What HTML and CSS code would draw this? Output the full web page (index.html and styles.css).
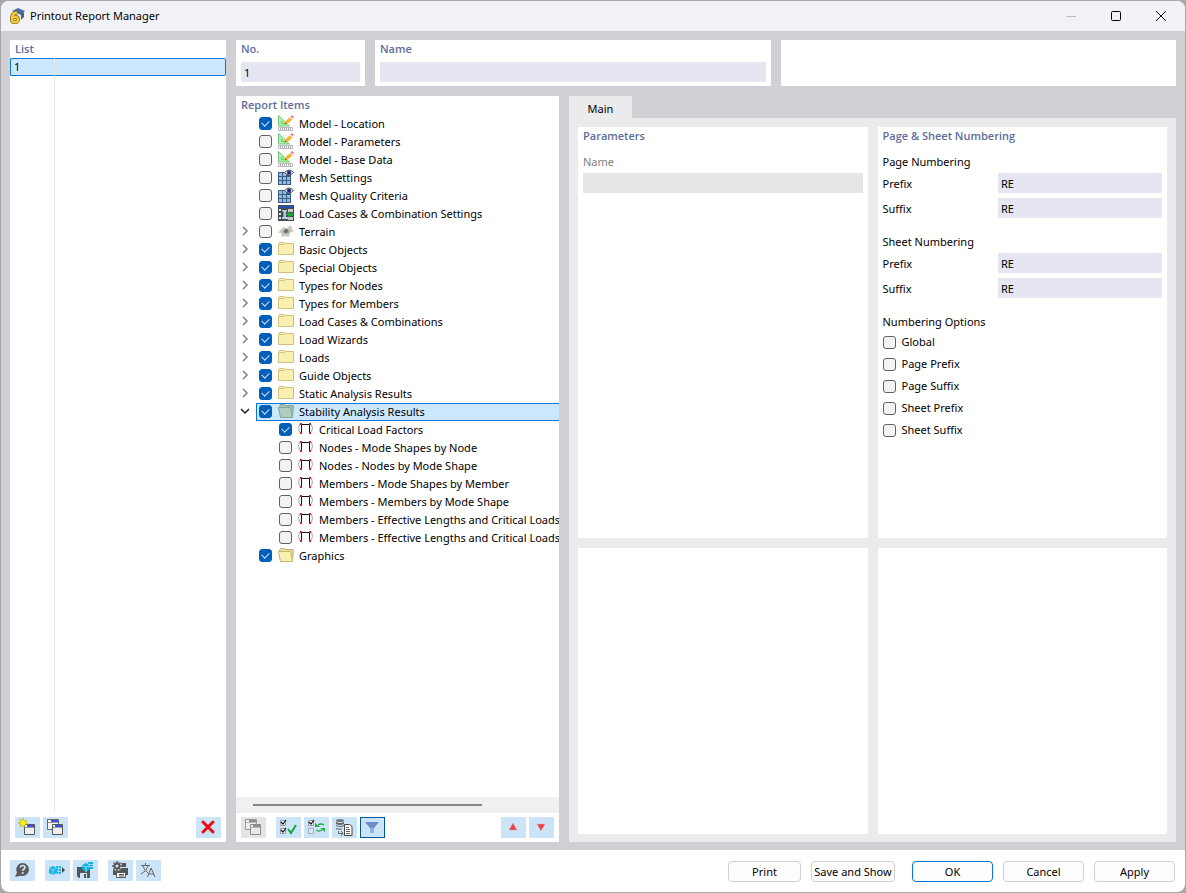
FILE: index.html
```html
<!DOCTYPE html>
<html lang="en">
<head>
  <meta charset="UTF-8" />
  <title>Printout Report Manager</title>
  <meta name="viewport" content="width=device-width, initial-scale=1.0" />
  <link rel="stylesheet" href="styles.css">
</head>
<body>
  <!-- shared icons -->
  <svg class="sprite" aria-hidden="true">
    <symbol id="i-model" viewBox="0 0 16 16">
      <path d="M.5.5v10.500h11z" fill="#a4f5a4" stroke="#7cc47c"/><path d="M3.500 6v2.500H6z" fill="#fff" stroke="#7cc47c"/>
      <path d="M6.500 9.500l1-3.500 4.500-4 2.500 2.500-4.500 4z" fill="#fbb52c"/><path d="M12.500 1.500L14 0l2 2-1.500 1.500z" fill="#f07f72"/><path d="M11.500 2.500l1-1 2 2-1 1z" fill="#ddd"/><path d="M6.500 9.500l.700-2 1.500 1.300z" fill="#664a30"/>
      <path d="M.5 12.500h14v3H.5z" fill="#fff" stroke="#bbb"/><path d="M2.500 13v2M4.500 13v2M6.500 13v2M8.500 13v2M10.500 13v2M12.500 13v2" stroke="#aaa"/>
    </symbol>
    <symbol id="i-mesh" viewBox="0 0 16 16">
      <path d="M0 3h13v13H0z" fill="#3b5a84"/>
      <path d="M1 4h3v3H1zM5 4h3v3H5zM1 8h3v3H1zM5 8h3v3H5zM9 8h3v3H9zM1 12h3v3H1zM5 12h3v3H5zM9 12h3v3H9z" fill="#93bbdf"/>
      <path d="M6.500 3.500q4.500-5 9 0-4.500 5-9 0z" fill="#dde" stroke="#556"/><circle cx="11" cy="3.500" r="2" fill="#22277a"/>
    </symbol>
    <symbol id="i-loads" viewBox="0 0 16 16">
      <path d="M0 0h16v16H0z" fill="#444b55"/><path d="M1 1h14v2H1z" fill="#2450b8"/><path d="M1 4h2v2H1zM1 8h2v2H1zM1 12h2v2H1z" fill="#ddd"/>
      <path d="M4 5h5v1.500H8V12h2v2H4v-2h1.500V6.500H4z" fill="#b6cbe0"/><path d="M10 4h5v3h-5zM10 12h5v3h-5z" fill="#ccc"/><path d="M8 9l4-3v2h3v3h-3v2z" fill="#17a737"/>
    </symbol>
    <symbol id="i-terrain" viewBox="0 0 16 16">
      <path d="M0 10l5-6 4 1 4-3 1 4 2 2-4 2-1 4-4-1-3 1-1-4z" fill="#c8cbbd"/><path d="M4 9l4-3 4 1-1 3-4 1z" fill="#a5a89b"/><circle cx="8" cy="8" r="2" fill="#6a6e68"/>
    </symbol>
    <symbol id="i-folder" viewBox="0 0 16 16">
      <path d="M.5 13.500V3.500l1-2h5l1 1h8v11z" fill="#f8efb1" stroke="#cec27c"/><path d="M1 3.500h5.500l1-1" fill="none" stroke="#cec27c"/>
    </symbol>
    <symbol id="i-folder-open" viewBox="0 0 16 16">
      <path d="M2.500 14.500L1.500 3.500l1-2h4l1 1h8l-1 12z" fill="#e5dc9b" stroke="#c5b873"/><path d="M2.500 14.500l-2-10h12l2 10z" fill="#f8efb1" stroke="#c5b873"/>
    </symbol>
    <symbol id="i-folder-sel" viewBox="0 0 16 16">
      <path d="M2.500 14.500L1.500 3.500l1-2h4l1 1h8l-1 12z" fill="#a3c0b2" stroke="#87a594"/><path d="M2.500 14.500l-2-10h12l2 10z" fill="#b1cdbf" stroke="#87a594"/>
    </symbol>
    <symbol id="i-frame" viewBox="0 0 16 16">
      <path d="M3 3.500h9M3.500 3v9M11.500 3v9" fill="none" stroke="#111"/>
      <path d="M2 3Q-1 7.500 2.500 12M13 3q3 4.500-.5 9" fill="none" stroke="#a0a0a0"/>
      <path d="M2 2h2v2H2zM11 2h2v2h-2zM2 11h2v2H2zM11 11h2v2h-2z" fill="#c5242e"/>
    </symbol>
    <symbol id="i-right" viewBox="0 0 10 10"><path d="M3 1l4 4-4 4" fill="none" stroke="#808080" stroke-width="1.500"/></symbol>
    <symbol id="i-down" viewBox="0 0 10 10"><path d="M1 3l4 4 4-4" fill="none" stroke="#222" stroke-width="1.500"/></symbol>
    <symbol id="i-copy" viewBox="0 0 18 18">
      <path d="M1.500 1.500h11v10h-11z" fill="#f5f5f5" stroke="#666"/><path d="M5 2h7v2H5z" fill="#3b50e0"/><path d="M2 4.500h10" stroke="#999"/>
      <path d="M6.500 6.500h10v10h-10z" fill="#ededed" stroke="#555"/><path d="M9 7h7v2H9z" fill="#3b50e0"/><path d="M7 9.500h9" stroke="#999"/>
    </symbol>
  </svg>

  <div class="window">
    <header class="titlebar">
      <svg class="app-icon" viewBox="0 0 16 16"><path d="M3 3l6-3 7 3-4 4z" fill="#4a6ea5"/><path d="M12 4l3 1v4l-3 3z" fill="#555e6b"/><path d="M8 4.500C4.500 5 3 8 3 11c0 4.500 6 4 6 .5C9 8.500 5.500 8 3.500 10" fill="none" stroke="#806618" stroke-width="4"/><path d="M8 4.500C4.500 5 3 8 3 11c0 4.500 6 4 6 .5C9 8.500 5.500 8 3.500 10" fill="none" stroke="#f5cb31" stroke-width="2.500"/></svg>
      <h1>Printout Report Manager</h1>
      <button class="win-btn" disabled aria-label="Minimize"><svg viewBox="0 0 12 12"><path d="M1 6.500h10" stroke="#bbb"/></svg></button>
      <button class="win-btn" aria-label="Maximize"><svg viewBox="0 0 12 12"><rect x="1.500" y="1.500" width="9" height="9" rx="1" fill="none" stroke="#000"/></svg></button>
      <button class="win-btn" aria-label="Close"><svg viewBox="0 0 12 12"><path d="M1 1l10 10M11 1L1 11" stroke="#111"/></svg></button>
    </header>

    <main class="workspace">
      <section class="panel list-panel">
        <h2>List</h2>
        <div class="list-body">
          <table>
            <tr class="selected"><td class="num">1</td><td></td></tr>
          </table>
        </div>
        <div class="toolbar">
          <button class="tool" title="New"><svg viewBox="0 0 18 18"><path d="M6.500 6.500h10v10h-10z" fill="#eee" stroke="#555"/><path d="M9 7h7v2H9z" fill="#3b50e0"/><path d="M7 9.500h9" stroke="#999"/><path d="M5 0l1 3 3-1-1.500 2.500L10 6 7 6.500 6 9.500 5 7 2 9l.800-3L0 5l3-1L1.500 1 4 2.500z" fill="#fff200" stroke="#a8a030" stroke-width=".5"/></svg></button>
          <button class="tool" title="Copy"><svg viewBox="0 0 18 18"><use href="#i-copy"/></svg></button>
          <button class="tool push" title="Delete"><svg viewBox="0 0 18 18"><path d="M4 4l10 10M14 4L4 14" stroke="#f00d0d" stroke-width="3" stroke-linecap="round"/></svg></button>
        </div>
      </section>

      <div class="content">
        <div class="head-row">
          <section class="panel no-panel">
            <h2><label for="no">No.</label></h2>
            <input class="field" id="no" type="text" value="1">
          </section>
          <section class="panel">
            <h2><label for="name">Name</label></h2>
            <input class="field" id="name" type="text">
          </section>
          <section class="panel"></section>
        </div>

        <div class="body-row">
          <section class="panel items-panel">
            <h2>Report Items</h2>
            <ul class="tree">
              <li><label><input type="checkbox" checked><svg><use href="#i-model"/></svg>Model - Location</label></li>
              <li><label><input type="checkbox"><svg><use href="#i-model"/></svg>Model - Parameters</label></li>
              <li><label><input type="checkbox"><svg><use href="#i-model"/></svg>Model - Base Data</label></li>
              <li><label><input type="checkbox"><svg><use href="#i-mesh"/></svg>Mesh Settings</label></li>
              <li><label><input type="checkbox"><svg><use href="#i-mesh"/></svg>Mesh Quality Criteria</label></li>
              <li><label><input type="checkbox"><svg><use href="#i-loads"/></svg>Load Cases &amp; Combination Settings</label></li>
              <li><button class="twisty" aria-label="Expand"><svg><use href="#i-right"/></svg></button><label><input type="checkbox"><svg><use href="#i-terrain"/></svg>Terrain</label></li>
              <li><button class="twisty" aria-label="Expand"><svg><use href="#i-right"/></svg></button><label><input type="checkbox" checked><svg><use href="#i-folder"/></svg>Basic Objects</label></li>
              <li><button class="twisty" aria-label="Expand"><svg><use href="#i-right"/></svg></button><label><input type="checkbox" checked><svg><use href="#i-folder"/></svg>Special Objects</label></li>
              <li><button class="twisty" aria-label="Expand"><svg><use href="#i-right"/></svg></button><label><input type="checkbox" checked><svg><use href="#i-folder"/></svg>Types for Nodes</label></li>
              <li><button class="twisty" aria-label="Expand"><svg><use href="#i-right"/></svg></button><label><input type="checkbox" checked><svg><use href="#i-folder"/></svg>Types for Members</label></li>
              <li><button class="twisty" aria-label="Expand"><svg><use href="#i-right"/></svg></button><label><input type="checkbox" checked><svg><use href="#i-folder"/></svg>Load Cases &amp; Combinations</label></li>
              <li><button class="twisty" aria-label="Expand"><svg><use href="#i-right"/></svg></button><label><input type="checkbox" checked><svg><use href="#i-folder"/></svg>Load Wizards</label></li>
              <li><button class="twisty" aria-label="Expand"><svg><use href="#i-right"/></svg></button><label><input type="checkbox" checked><svg><use href="#i-folder"/></svg>Loads</label></li>
              <li><button class="twisty" aria-label="Expand"><svg><use href="#i-right"/></svg></button><label><input type="checkbox" checked><svg><use href="#i-folder"/></svg>Guide Objects</label></li>
              <li><button class="twisty" aria-label="Expand"><svg><use href="#i-right"/></svg></button><label><input type="checkbox" checked><svg><use href="#i-folder"/></svg>Static Analysis Results</label></li>
              <li><button class="twisty" aria-label="Collapse"><svg><use href="#i-down"/></svg></button><label class="selected"><input type="checkbox" checked><svg><use href="#i-folder-sel"/></svg>Stability Analysis Results</label>
                <ul>
                  <li><label><input type="checkbox" checked><svg><use href="#i-frame"/></svg>Critical Load Factors</label></li>
                  <li><label><input type="checkbox"><svg><use href="#i-frame"/></svg>Nodes - Mode Shapes by Node</label></li>
                  <li><label><input type="checkbox"><svg><use href="#i-frame"/></svg>Nodes - Nodes by Mode Shape</label></li>
                  <li><label><input type="checkbox"><svg><use href="#i-frame"/></svg>Members - Mode Shapes by Member</label></li>
                  <li><label><input type="checkbox"><svg><use href="#i-frame"/></svg>Members - Members by Mode Shape</label></li>
                  <li><label><input type="checkbox"><svg><use href="#i-frame"/></svg>Members - Effective Lengths and Critical Loads</label></li>
                  <li><label><input type="checkbox"><svg><use href="#i-frame"/></svg>Members - Effective Lengths and Critical Loads</label></li>
                </ul>
              </li>
              <li><label><input type="checkbox" checked><svg><use href="#i-folder-open"/></svg>Graphics</label></li>
            </ul>
            <div class="scrollbar"><div class="thumb"></div></div>
            <div class="toolbar">
              <button class="tool off" disabled title="Copy"><svg viewBox="0 0 18 18"><use href="#i-copy"/></svg></button>
              <button class="tool sep" title="Select all"><svg viewBox="0 0 18 18"><path d="M1.500 2.500h5v5h-5zM1.500 10.500h5v5h-5z" fill="#fff" stroke="#999"/><path d="M2 4l2 2 3-4M2 12l2 2 3-4" fill="none" stroke="#111" stroke-width="1.200"/><path d="M9 11l3 4 5-8" fill="none" stroke="#14a83c" stroke-width="2"/></svg></button>
              <button class="tool" title="Invert selection"><svg viewBox="0 0 18 18"><path d="M1.500 2.500h5v5h-5z" fill="#fff" stroke="#999"/><path d="M1.500 10.500h5v5h-5z" fill="#dcebf8" stroke="#aaa"/><path d="M2 4l2 2 3-4" fill="none" stroke="#111" stroke-width="1.200"/><path d="M17 7q-3-2-6 0M9 12q3 2 6 0" fill="none" stroke="#2aa84c" stroke-width="1.500"/><path d="M8 5v4h5zM18 14v-4h-5z" fill="#2aa84c"/></svg></button>
              <button class="tool" title="Copy from report"><svg viewBox="0 0 18 18"><ellipse cx="5" cy="2.500" rx="4" ry="1.500" fill="#777"/><path d="M1 4q4 2 8 0v2q-4 2-8 0zM1 7q4 2 8 0v1q-2 2-8 0zM1 10q3 1 6 .5v1Q3 12 1 11z" fill="#666"/><path d="M3.500 13v2.500H8M6 13l2 2.500L6 18" fill="none" stroke="#666"/><path d="M9.500 6.500h5l2.500 2v9H9.500z" fill="#fff" stroke="#444"/><path d="M11 9.500h3M11 11.500h4M11 13.500h4M11 15.500h4" stroke="#666"/></svg></button>
              <button class="tool on" title="Filter"><svg viewBox="0 0 18 18"><path d="M2 4h14l-5 6v4l-1 1H8l-1-1v-4z" fill="#6c8cc4"/><path d="M7 10h4v4l-1 1H8l-1-1z" fill="#8fb2ee"/></svg></button>
              <button class="tool push" title="Move up"><svg viewBox="0 0 18 18"><path d="M9 5l4 7H5z" fill="#e2444b" stroke="#eca0a6" stroke-width=".5"/></svg></button>
              <button class="tool" title="Move down"><svg viewBox="0 0 18 18"><path d="M9 13L5 6h8z" fill="#e2444b" stroke="#eca0a6" stroke-width=".5"/></svg></button>
            </div>
          </section>

          <div class="tabs">
            <button class="tab">Main</button>
            <div class="tab-page">
              <section class="panel params">
                <h2>Parameters</h2>
                <label for="param-name" class="muted">Name</label>
                <input class="field" id="param-name" type="text" disabled>
              </section>
              <section class="panel numbering">
                <h2>Page &amp; Sheet Numbering</h2>
                <fieldset>
                  <legend>Page Numbering</legend>
                  <div class="row"><label for="pp">Prefix</label><input class="field" id="pp" type="text" value="RE"></div>
                  <div class="row"><label for="ps">Suffix</label><input class="field" id="ps" type="text" value="RE"></div>
                </fieldset>
                <fieldset>
                  <legend>Sheet Numbering</legend>
                  <div class="row"><label for="sp">Prefix</label><input class="field" id="sp" type="text" value="RE"></div>
                  <div class="row"><label for="ss">Suffix</label><input class="field" id="ss" type="text" value="RE"></div>
                </fieldset>
                <fieldset class="options">
                  <legend>Numbering Options</legend>
                  <label><input type="checkbox"> Global</label>
                  <label><input type="checkbox"> Page Prefix</label>
                  <label><input type="checkbox"> Page Suffix</label>
                  <label><input type="checkbox"> Sheet Prefix</label>
                  <label><input type="checkbox"> Sheet Suffix</label>
                </fieldset>
              </section>
              <section class="panel"></section>
              <section class="panel"></section>
            </div>
          </div>
        </div>
      </div>
    </main>

    <footer class="footer">
      <button class="tool" title="Help"><svg viewBox="0 0 18 18"><path d="M9.500 2a6.500 6.500 0 1 1-2 12.700L2 16l2-4.500A6.500 6.500 0 0 1 9.500 2z" fill="#5a5a5a"/><path d="M7.500 6.500q0-2 2.200-2t2.200 2q0 1.200-1.200 1.800-1 .500-1 1.700M9.700 11v2" fill="none" stroke="#cce4f7" stroke-width="1.700"/></svg></button>
      <button class="tool sep" title="Units"><svg viewBox="0 0 18 18"><path d="M1 7l4-2 4 2v5l-4 2-4-2z" fill="#12b5e5"/><path d="M1 7l4 2 4-2M5 9v5" fill="none" stroke="#7fd6f0"/><path d="M8 5h5v8H9z" fill="#12b5e5"/><path d="M9 7.500h4M9 10.500h4M10.500 5v8" stroke="#cce4f7" stroke-width=".7"/><path d="M14 6l3 3-3 3z" fill="#444"/></svg></button>
      <button class="tool" title="Save as default"><svg viewBox="0 0 18 18"><path d="M1 6h12l1 2v9H3l-2-2z" fill="#555"/><path d="M4 12h7v5H4z" fill="#cce4f7"/><path d="M8 13h2v4H8z" fill="#555"/><path d="M6 4l4-2 4 2v4l-4 3-4-3z" fill="#12b5e5"/><path d="M6 4l4 2 4-2M10 6v5" fill="none" stroke="#7fd6f0"/><path d="M12 1h5v7h-4z" fill="#12b5e5"/><path d="M12 3.500h5M12 5.500h5" stroke="#cce4f7" stroke-width=".7"/></svg></button>
      <button class="tool sep" title="Printer settings"><svg viewBox="0 0 18 18"><path d="M10 2h5v4h-5zM2 7h15v7h-3v-2H6v2H2z" fill="#555"/><path d="M5.500 11.500h9v5h-9z" fill="#fff" stroke="#555"/><path d="M8 13.500h5M8 15h5" stroke="#555"/><circle cx="6" cy="5" r="5" fill="#cce4f7"/><circle cx="6" cy="5" r="2.500" fill="none" stroke="#555" stroke-width="2"/><path d="M6 0v2M6 8v2M1 5h2M9 5h2M2.500 1.500l1 1M9.500 1.500l-1 1M2.500 8.500l1-1M9.500 8.500l-1-1" stroke="#555" stroke-width="1.500"/></svg></button>
      <button class="tool" title="Language"><svg viewBox="0 0 18 18"><path d="M2 4.500h9M6.500 2v2.500M9 5Q8 10 2 13M4 5q1 4 5 7M8.500 16l3.500-9 4 9M10 13h5" fill="none" stroke="#666"/></svg></button>
      <div class="actions">
        <button class="btn small">Print</button>
        <button class="btn wide">Save and Show</button>
        <button class="btn primary">OK</button>
        <button class="btn">Cancel</button>
        <button class="btn">Apply</button>
      </div>
    </footer>
  </div>
</body>
</html>
```
FILE: styles.css
```css
* { box-sizing: border-box; }
body { margin: 0; padding: 1px; height: 100vh; background: #a9a9a9; font: 11px/16px 'Noto Sans', 'Open Sans', sans-serif; color: #000; }
button, input { font: inherit; color: inherit; }
button { padding: 0; border: 0; background: none; }
h1, h2, ul, fieldset { margin: 0; padding: 0; }
svg { display: block; }
.sprite { display: none; }

.window { display: flex; flex-direction: column; height: 100%; background: #fff; border-radius: 8px; overflow: hidden; }
.titlebar { display: flex; align-items: center; height: 30px; padding: 0 2px 0 8px; background: #f1f2f8; }
.titlebar h1 { flex: 1; margin-left: 5px; font-size: 11px; font-weight: normal; }
.app-icon { width: 16px; height: 16px; }
.win-btn { width: 45px; height: 30px; display: flex; align-items: center; justify-content: center; }
.win-btn svg { width: 12px; height: 12px; }

.workspace { flex: 1; min-height: 0; display: flex; gap: 10px; padding: 9px 9px 8px; background: #d0cfd4; }
.panel { display: flex; flex-direction: column; background: #fff; min-width: 0; }
.panel h2 { padding: 1px 5px; font: 600 11px/16px 'Open Sans', sans-serif; color: #5d6d9b; }

.list-panel { width: 216px; }
.list-body { flex: 1; margin-bottom: 5px; background: linear-gradient(#e5e5e5, #e5e5e5) 44px 0 / 1px 100% no-repeat; }
.list-body table { width: 100%; border-collapse: separate; border-spacing: 0; }
.list-body td { height: 18px; padding: 0 3px; background: #cce8ff; border: solid #0078d7; border-width: 1px 0; line-height: 16px; }
.list-body td:last-child { border-right-width: 1px; border-radius: 0 2px 2px 0; }
.list-body .num { width: 45px; border-left-width: 1px; border-right: 1px solid #e5e5e5; border-radius: 2px 0 0 2px; }

.toolbar { display: flex; gap: 3px; padding: 0 5px 4px; }
.tool { width: 25px; height: 21px; display: flex; padding: 1px 0 0 3px; background: #cce4f7; }
.tool svg { width: 18px; height: 18px; }
.tool.on { padding: 0 0 0 2px; border: 1px solid #005499; }
.tool.off { background: #e4e4e4; }
.tool.off svg { filter: grayscale(1); opacity: .6; }
.push { margin-left: auto; }

.content { flex: 1; min-width: 0; display: flex; flex-direction: column; gap: 10px; }
.head-row { display: flex; gap: 10px; height: 46px; }
.head-row .panel { flex: 1; }
.head-row .no-panel { flex: none; width: 129px; }
.head-row .field { margin: 4px 5px; }
.field { height: 20px; min-width: 0; padding: 0 3px; border: 0; background: #e6e6f2; }
.field:disabled { background: #e6e6e6; }

.body-row { flex: 1; min-height: 0; display: flex; gap: 10px; }
.items-panel { width: 323px; }
.items-panel .sep { margin-left: 7px; }
.tree { flex: 1; overflow: hidden; margin-top: 1px; }
.tree ul { flex-basis: 100%; margin-left: -20px; padding-left: 20px; }
.tree li { display: flex; flex-wrap: wrap; padding-left: 20px; }
.tree label { flex: 1; display: flex; align-items: center; height: 18px; padding-left: 3px; white-space: nowrap; }
.tree label input { margin-bottom: 1px; }
.tree label svg { flex: none; width: 16px; height: 16px; margin: 0 5px 2px 6px; }
.tree .selected { padding-left: 2px; background: #cce8ff; border: 1px solid #0078d7; border-right: 0; }
.twisty { width: 20px; height: 18px; margin-left: -20px; padding: 0 0 2px 4px; }
.twisty svg { width: 10px; height: 10px; }

input[type=checkbox] { appearance: none; flex: none; width: 13px; height: 13px; margin: 0; border: 1px solid #626262; border-radius: 3px; background: #f3f3f3; }
input[type=checkbox]:checked { border-color: #005fb8; background: #005fb8; display: grid; place-items: center; }
input[type=checkbox]:checked::before { content: ""; width: 6px; height: 4px; margin-bottom: 2px; border: solid #cfe0f2; border-width: 0 0 1px 1px; transform: rotate(-45deg); }

.scrollbar { height: 16px; margin-bottom: 4px; padding: 7px 77px 0 17px; background: #f0f0f0; }
.thumb { height: 2px; background: #868686; }

.tabs { flex: 1; min-width: 0; display: flex; flex-direction: column; align-items: flex-start; }
.tab { width: 63px; height: 22px; padding-top: 3px; background: #ebebeb; }
.tab-page { flex: 1; align-self: stretch; display: grid; grid-template-columns: 1fr 1fr; grid-template-rows: 411fr 286fr; gap: 10px; padding: 9px 9px 8px; background: #ebebeb; }
.params label { margin: 9px 5px 3px; }
.params .field { margin: 0 5px; }
.muted { color: #808080; }
.numbering fieldset { border: 0; padding: 0 5px; margin: 9px 0 2px; }
.numbering legend { padding: 0; margin-bottom: 3px; }
.row { display: flex; align-items: center; margin-bottom: 5px; }
.row label { flex: 1; padding-top: 2px; }
.row .field { width: 164px; }
.numbering .options legend { margin-bottom: 1px; }
.options label { display: flex; align-items: center; gap: 6px; height: 22px; }

.footer { display: flex; gap: 3px; height: 42px; padding: 10px 10px 0 9px; }
.footer .sep { margin-left: 7px; }
.actions { display: flex; gap: 10px; margin: 1px 0 0 auto; }
.btn { width: 81px; height: 21px; border: 1px solid #d0d0d0; border-radius: 4px; background: #fdfdfd; white-space: nowrap; }
.btn.small { width: 73px; }
.btn.wide { width: 84px; }
.btn.primary { margin-left: 7px; border-color: #0078d4; }
```
